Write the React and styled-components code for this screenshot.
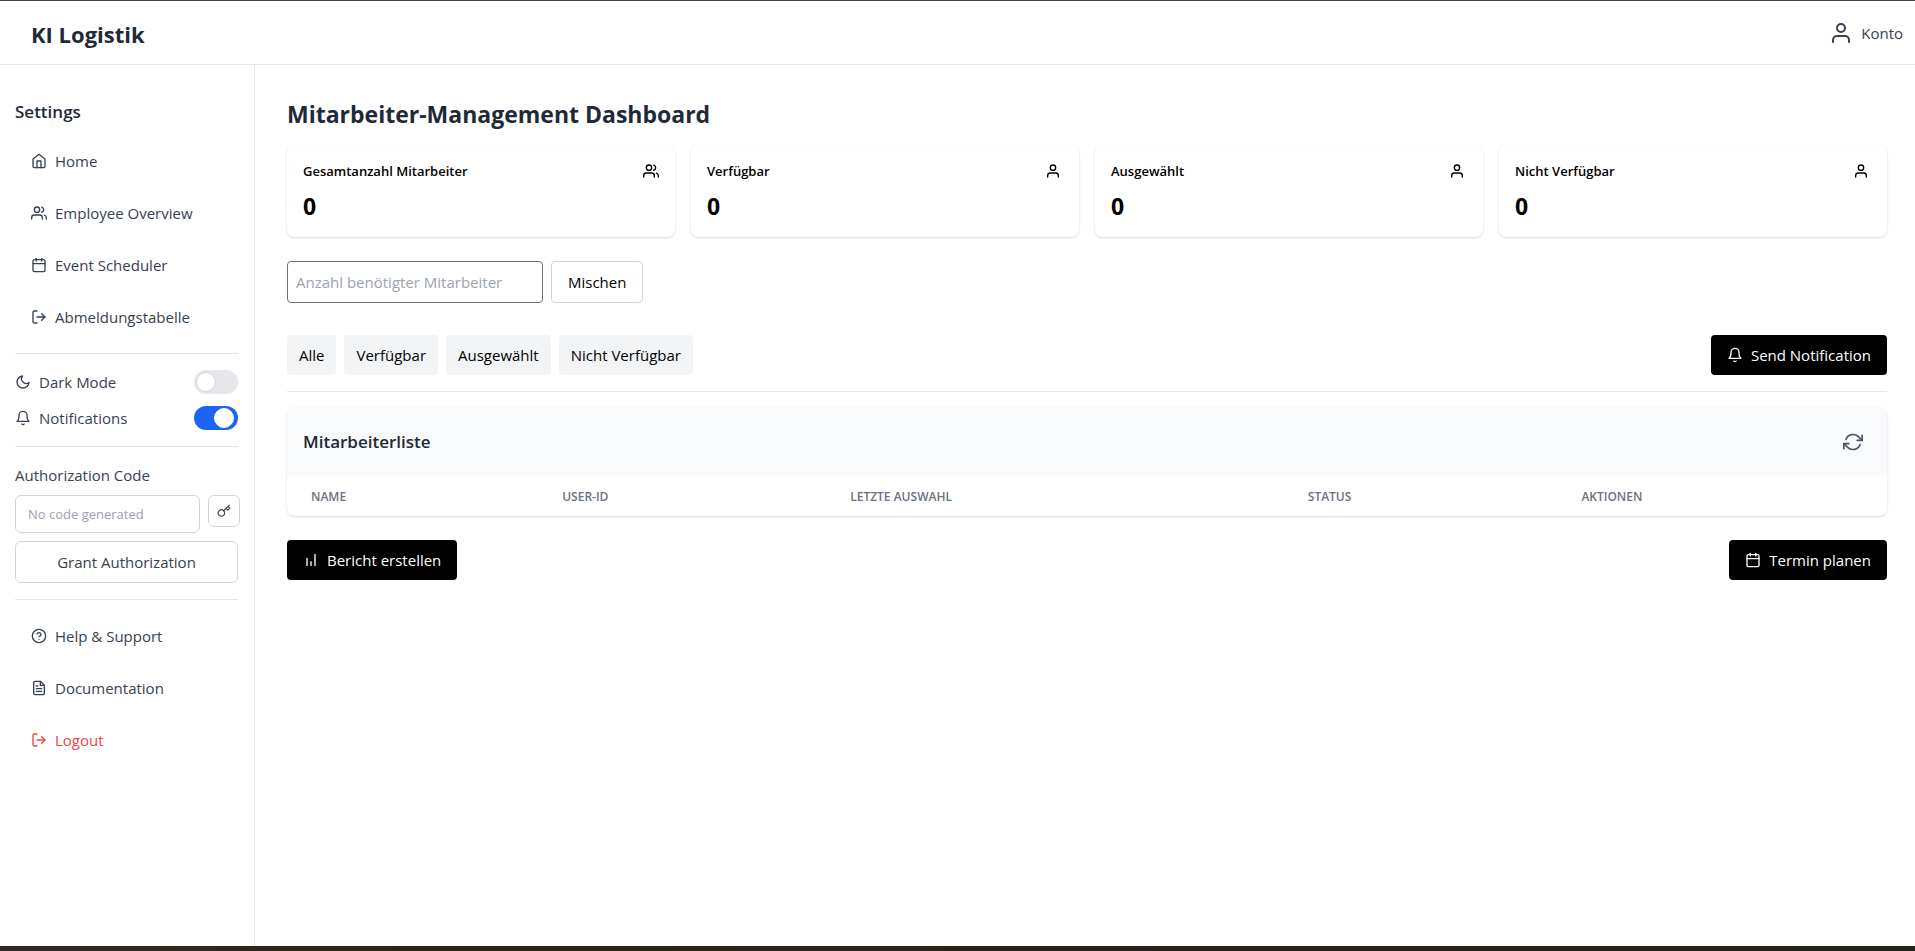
import React from 'react';
import styled, { createGlobalStyle } from 'styled-components';
import {
  FiHome, FiUsers, FiCalendar, FiLogOut, FiMoon, FiBell, FiKey, FiHelpCircle, FiFileText, FiUser, FiRefreshCw,
} from 'react-icons/fi';

const GlobalStyle = createGlobalStyle`
  *, *::before, *::after { box-sizing: border-box; }
  body {
    margin: 0;
    background: #ffffff;
    color: #000000;
    font-family: "Open Sans", "Noto Sans", sans-serif;
    font-size: 15px;
    line-height: 24px;
  }
  button, input { font: inherit; color: inherit; margin: 0; }
  button { cursor: pointer; }
  h1, h2, h3, p, ul, dl, dd, dt { margin: 0; padding: 0; font-weight: inherit; font-size: inherit; }
  svg { flex-shrink: 0; display: block; }
`;

const Page = styled.div`
  display: flex;
  flex-direction: column;
  min-height: 100vh;
  border-top: 1px solid #444444;
`;

const Header = styled.header`
  display: flex;
  align-items: center;
  justify-content: space-between;
  height: 64px;
  padding: 0 12px 0 31px;
  border-bottom: 1px solid #e5e7eb;
`;

const Brand = styled.h1`
  && { font-size: 22px; font-weight: 700; }
  padding-top: 2px;
  line-height: 32px;
  color: #1f2937;
`;

const AccountButton = styled.button`
  display: flex;
  align-items: center;
  gap: 8px;
  padding: 0;
  border: 0;
  background: none;
  color: #374151;
`;

const Body = styled.div`
  display: flex;
  flex: 1;
`;

const Sidebar = styled.aside`
  width: 255px;
  flex-shrink: 0;
  padding: 33px 16px 32px 15px;
  border-right: 1px solid #e5e7eb;
  color: #374151;
`;

const SidebarTitle = styled.h2`
  && { font-size: 17px; font-weight: 600; }
  line-height: 28px;
  color: #1f2937;
  margin-bottom: 13px;
`;

const NavList = styled.ul`
  list-style: none;
  display: flex;
  flex-direction: column;
  gap: 8px;
`;

const NavLink = styled.a`
  display: flex;
  align-items: center;
  gap: 8px;
  height: 44px;
  padding: 0 16px;
  color: ${(p) => (p.$danger ? '#ef4444' : '#374151')};
  text-decoration: none;
`;

const Rule = styled.hr`
  height: 1px;
  border: 0;
  margin: ${(p) => p.$space || '16px 0'};
  background: #e5e7eb;
`;

const ToggleList = styled.div`
  display: flex;
  flex-direction: column;
  gap: 12px;
`;

const ToggleRow = styled.label`
  display: flex;
  align-items: center;
  gap: 8px;
`;

const ToggleText = styled.span`
  flex: 1;
`;

const Switch = styled.input`
  appearance: none;
  width: 44px;
  height: 24px;
  border-radius: 12px;
  background: #e5e7eb;
  padding: 2px;
  display: flex;
  cursor: pointer;
  &::before {
    content: "";
    width: 20px;
    height: 20px;
    border-radius: 50%;
    border: 1px solid #d1d5db;
    background: #ffffff;
  }
  &:checked {
    background: #1c64f2;
    justify-content: flex-end;
    padding-right: 4px;
  }
  &:checked::before { border-color: #ffffff; }
`;

const FieldLabel = styled.label`
  display: block;
  margin-bottom: 8px;
`;

const CodeRow = styled.div`
  display: flex;
  align-items: flex-start;
  gap: 8px;
  margin: 0 -2px 8px 0;
`;

const CodeInput = styled.input`
  flex: 1;
  min-width: 0;
  height: 38px;
  padding: 0 12px;
  border: 1px solid #d1d5db;
  border-radius: 6px;
  font-size: 13px;
  background: #ffffff;
  &::placeholder { color: #9ca3af; opacity: 1; }
`;

const KeyButton = styled.button`
  display: flex;
  align-items: center;
  justify-content: center;
  width: 32px;
  height: 32px;
  padding: 0;
  border: 1px solid #d1d5db;
  border-radius: 6px;
  background: #ffffff;
`;

const GrantButton = styled.button`
  width: 100%;
  height: 42px;
  border: 1px solid #d1d5db;
  border-radius: 6px;
  background: #ffffff;
`;

const Main = styled.main`
  flex: 1;
  min-width: 0;
  padding: 33px 28px 32px 32px;
`;

const PageTitle = styled.h2`
  && { font-size: 23px; font-weight: 700; }
  line-height: 32px;
  color: #1f2937;
  margin-bottom: 15px;
`;

const StatGrid = styled.dl`
  display: grid;
  grid-template-columns: repeat(4, 1fr);
  gap: 16px;
  margin-bottom: 24px;
`;

const StatCard = styled.div`
  padding: 16px 16px 15px;
  border-radius: 8px;
  background: #ffffff;
  box-shadow: 0 1px 3px rgba(0, 0, 0, 0.1), 0 1px 2px rgba(0, 0, 0, 0.06);
`;

const StatLabel = styled.dt`
  display: flex;
  align-items: center;
  justify-content: space-between;
  margin-bottom: 9px;
  padding-right: ${(p) => (p.$single ? '2px' : '0')};
  && { font-size: 13px; font-weight: 600; }
  line-height: 20px;
`;

const StatValue = styled.dd`
  && { font-size: 23px; font-weight: 700; }
  line-height: 32px;
`;

const ShuffleForm = styled.form`
  display: flex;
  gap: 8px;
  margin-bottom: 32px;
`;

const CountInput = styled.input`
  width: 256px;
  height: 42px;
  padding: 0 8px;
  border: 1px solid #6b7280;
  border-radius: 4px;
  background: #ffffff;
  &::placeholder { color: #9ca3af; opacity: 1; }
`;

const OutlineButton = styled.button`
  height: 42px;
  padding: 0 16px;
  border: 1px solid #d1d5db;
  border-radius: 4px;
  background: #ffffff;
`;

const Bar = styled.div`
  display: flex;
  align-items: center;
  justify-content: space-between;
`;

const FilterGroup = styled.div`
  display: flex;
  gap: 8px;
`;

const FilterButton = styled.button`
  height: 40px;
  padding: 0 12px;
  border: 0;
  border-radius: 4px;
  background: #f3f4f6;
`;

const PrimaryButton = styled.button`
  display: flex;
  align-items: center;
  gap: 8px;
  height: 40px;
  padding: 0 16px;
  border: 0;
  border-radius: 4px;
  background: #000000;
  color: #ffffff;
`;

const TableCard = styled.section`
  margin-bottom: 24px;
  border-radius: 8px;
  overflow: hidden;
  background: #ffffff;
  box-shadow: 0 1px 3px rgba(0, 0, 0, 0.1), 0 1px 2px rgba(0, 0, 0, 0.06);
`;

const TableHeader = styled.div`
  display: flex;
  align-items: center;
  justify-content: space-between;
  height: 69px;
  padding: 0 16px;
  background: #f9fafb;
`;

const TableTitle = styled.h3`
  && { font-size: 17px; font-weight: 600; }
  padding-top: 1px;
  line-height: 28px;
  color: #1f2937;
`;

const IconButton = styled.button`
  padding: 8px;
  border: 0;
  background: none;
  color: #4b5563;
`;

const Table = styled.table`
  width: 100%;
  table-layout: fixed;
  border-collapse: collapse;
`;

const HeadCell = styled.th`
  width: ${(p) => p.$width};
  padding: 13px 24px 11px;
  font-size: 12px;
  line-height: 16px;
  font-weight: 600;
  text-align: left;
  text-transform: uppercase;
  color: #6b7280;
`;

const BottomEdge = styled.footer`
  height: 5px;
  background: linear-gradient(90deg, #302828, #2c2713 20%, #2a211a 60%, #24241a);
`;

const ReportIcon = () => (
  <svg width="16" height="16" viewBox="0 0 24 24" fill="none" stroke="currentColor" strokeWidth="2" aria-hidden="true">
    <path d="M6 9v12M12 14v7M18 3v18" />
  </svg>
);

const navItems = [
  ['Home', FiHome],
  ['Employee Overview', FiUsers],
  ['Event Scheduler', FiCalendar],
  ['Abmeldungstabelle', FiLogOut],
];

const supportItems = [
  ['Help & Support', FiHelpCircle],
  ['Documentation', FiFileText],
  ['Logout', FiLogOut, true],
];

const stats = [
  ['Gesamtanzahl Mitarbeiter', FiUsers],
  ['Verfügbar', FiUser],
  ['Ausgewählt', FiUser],
  ['Nicht Verfügbar', FiUser],
];

const filters = ['Alle', 'Verfügbar', 'Ausgewählt', 'Nicht Verfügbar'];

const columns = [
  ['Name', '15.7%'],
  ['User-ID', '18%'],
  ['Letzte Auswahl', '28.6%'],
  ['Status', '17.1%'],
  ['Aktionen', '20.6%'],
];

const Nav = ({ items, label }) => (
  <nav aria-label={label}>
    <NavList>
      {items.map(([text, Icon, danger]) => (
        <li key={text}>
          <NavLink href="#" $danger={danger}>
            <Icon size={16} />
            {text}
          </NavLink>
        </li>
      ))}
    </NavList>
  </nav>
);

export default function App() {
  return (
    <>
      <GlobalStyle />
      <Page>
        <Header>
          <Brand>KI Logistik</Brand>
          <AccountButton type="button">
            <FiUser size={24} />
            Konto
          </AccountButton>
        </Header>
        <Body>
          <Sidebar>
            <SidebarTitle>Settings</SidebarTitle>
            <Nav items={navItems} label="Settings" />
            <Rule $space="14px 0 16px" />
            <ToggleList>
              <ToggleRow>
                <FiMoon size={16} />
                <ToggleText>Dark Mode</ToggleText>
                <Switch type="checkbox" role="switch" />
              </ToggleRow>
              <ToggleRow>
                <FiBell size={16} />
                <ToggleText>Notifications</ToggleText>
                <Switch type="checkbox" role="switch" defaultChecked />
              </ToggleRow>
            </ToggleList>
            <Rule />
            <FieldLabel htmlFor="auth-code">Authorization Code</FieldLabel>
            <CodeRow>
              <CodeInput id="auth-code" type="text" placeholder="No code generated" readOnly />
              <KeyButton type="button" aria-label="Generate code">
                <FiKey size={14} />
              </KeyButton>
            </CodeRow>
            <GrantButton type="button">Grant Authorization</GrantButton>
            <Rule $space="16px 0 14px" />
            <Nav items={supportItems} label="Support" />
          </Sidebar>
          <Main>
            <PageTitle>Mitarbeiter-Management Dashboard</PageTitle>
            <StatGrid>
              {stats.map(([text, Icon]) => (
                <StatCard key={text}>
                  <StatLabel $single={Icon === FiUser}>
                    {text}
                    <Icon size={16} />
                  </StatLabel>
                  <StatValue>0</StatValue>
                </StatCard>
              ))}
            </StatGrid>
            <ShuffleForm onSubmit={(e) => e.preventDefault()}>
              <CountInput type="text" inputMode="numeric" placeholder="Anzahl benötigter Mitarbeiter" aria-label="Anzahl benötigter Mitarbeiter" />
              <OutlineButton type="submit">Mischen</OutlineButton>
            </ShuffleForm>
            <Bar>
              <FilterGroup>
                {filters.map((text) => (
                  <FilterButton type="button" key={text}>{text}</FilterButton>
                ))}
              </FilterGroup>
              <PrimaryButton type="button">
                <FiBell size={16} />
                Send Notification
              </PrimaryButton>
            </Bar>
            <Rule $space="16px 0 15px" />
            <TableCard>
              <TableHeader>
                <TableTitle>Mitarbeiterliste</TableTitle>
                <IconButton type="button" aria-label="Aktualisieren">
                  <FiRefreshCw size={20} />
                </IconButton>
              </TableHeader>
              <Table>
                <thead>
                  <tr>
                    {columns.map(([text, width]) => (
                      <HeadCell key={text} scope="col" $width={width}>{text}</HeadCell>
                    ))}
                  </tr>
                </thead>
              </Table>
            </TableCard>
            <Bar>
              <PrimaryButton type="button">
                <ReportIcon />
                Bericht erstellen
              </PrimaryButton>
              <PrimaryButton type="button">
                <FiCalendar size={16} />
                Termin planen
              </PrimaryButton>
            </Bar>
          </Main>
        </Body>
        <BottomEdge />
      </Page>
    </>
  );
}
